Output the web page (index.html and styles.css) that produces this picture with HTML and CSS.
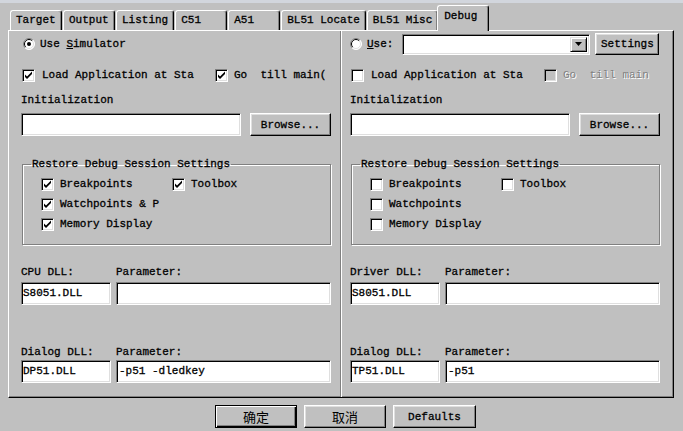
FILE: index.html
```html
<!DOCTYPE html>
<html>
<head>
<meta charset="utf-8">
<link rel="stylesheet" href="styles.css">
</head>
<body>
<div class="topstrip"></div>
<div class="dialog">
  <div class="tabs">
    <div class="tab">Target</div>
    <div class="tab">Output</div>
    <div class="tab">Listing</div>
    <div class="tab">C51</div>
    <div class="tab">A51</div>
    <div class="tab">BL51 Locate</div>
    <div class="tab">BL51 Misc</div>
    <div class="tab active">Debug</div>
  </div>
  <div class="panel">
    <div class="col col-left">
      <div class="row r1">
        <span class="radio"><svg width="12" height="12" viewBox="0 0 12 12"><circle cx="6" cy="6" r="5.5" fill="#fff"/><path d="M2.1 9.9A5.5 5.5 0 0 1 9.9 2.1" stroke="#808080" fill="none"/><path d="M9.9 2.1A5.5 5.5 0 0 1 2.1 9.9" stroke="#fff" fill="none"/><path d="M2.8 9.2A4.5 4.5 0 0 1 9.2 2.8" stroke="#000" fill="none"/><path d="M9.2 2.8A4.5 4.5 0 0 1 2.8 9.2" stroke="#dfdfdf" fill="none"/><circle cx="6" cy="6" r="2" fill="#000"/></svg></span>
        <span class="rlabel">Use <u>S</u>imulator</span>
      </div>
      <div class="row r2">
        <div class="cbi first"><span class="cb"><svg width="11" height="11" viewBox="1 1 11 11"><polygon points="3,5.5 5,7.5 10,2.5 10,5 5,10 3,8" fill="#000"/></svg></span><span>Load Application at Sta</span></div>
        <div class="cbi"><span class="cb"><svg width="11" height="11" viewBox="1 1 11 11"><polygon points="3,5.5 5,7.5 10,2.5 10,5 5,10 3,8" fill="#000"/></svg></span><span>Go&nbsp; till main(</span></div>
      </div>
      <div class="label init">Initialization</div>
      <div class="row r3">
        <div class="field wide"></div>
        <div class="btn browse">Browse...</div>
      </div>
      <fieldset class="group">
        <legend>Restore Debug Session Settings</legend>
        <div class="grid">
          <div class="cbi"><span class="cb"><svg width="11" height="11" viewBox="1 1 11 11"><polygon points="3,5.5 5,7.5 10,2.5 10,5 5,10 3,8" fill="#000"/></svg></span><span>Breakpoints</span></div>
          <div class="cbi"><span class="cb"><svg width="11" height="11" viewBox="1 1 11 11"><polygon points="3,5.5 5,7.5 10,2.5 10,5 5,10 3,8" fill="#000"/></svg></span><span>Toolbox</span></div>
          <div class="cbi span2"><span class="cb"><svg width="11" height="11" viewBox="1 1 11 11"><polygon points="3,5.5 5,7.5 10,2.5 10,5 5,10 3,8" fill="#000"/></svg></span><span>Watchpoints &amp; P</span></div>
          <div class="cbi span2"><span class="cb"><svg width="11" height="11" viewBox="1 1 11 11"><polygon points="3,5.5 5,7.5 10,2.5 10,5 5,10 3,8" fill="#000"/></svg></span><span>Memory Display</span></div>
        </div>
      </fieldset>
      <div class="dll-labels first-dll"><span class="dl">CPU DLL:</span><span>Parameter:</span></div>
      <div class="row dll"><div class="field small">S8051.DLL</div><div class="field param"></div></div>
      <div class="dll-labels second-dll"><span class="dl">Dialog DLL:</span><span>Parameter:</span></div>
      <div class="row dll"><div class="field small">DP51.DLL</div><div class="field param">-p51 -dledkey</div></div>
    </div>
    <div class="sep"></div>
    <div class="col col-right">
      <div class="row r1">
        <span class="radio"><svg width="12" height="12" viewBox="0 0 12 12"><circle cx="6" cy="6" r="5.5" fill="#fff"/><path d="M2.1 9.9A5.5 5.5 0 0 1 9.9 2.1" stroke="#808080" fill="none"/><path d="M9.9 2.1A5.5 5.5 0 0 1 2.1 9.9" stroke="#fff" fill="none"/><path d="M2.8 9.2A4.5 4.5 0 0 1 9.2 2.8" stroke="#000" fill="none"/><path d="M9.2 2.8A4.5 4.5 0 0 1 2.8 9.2" stroke="#dfdfdf" fill="none"/></svg></span>
        <span class="rlabel"><u>U</u>se:</span>
        <div class="field combo"><span class="drop"><svg width="7" height="4" viewBox="0 0 7 4"><polygon points="0,0 7,0 3.5,4" fill="#000"/></svg></span></div>
        <div class="btn settings">Settings</div>
      </div>
      <div class="row r2">
        <div class="cbi first"><span class="cb"></span><span>Load Application at Sta</span></div>
        <div class="cbi disabled"><span class="cb dis"></span><span>Go&nbsp; till main</span></div>
      </div>
      <div class="label init">Initialization</div>
      <div class="row r3">
        <div class="field wide"></div>
        <div class="btn browse">Browse...</div>
      </div>
      <fieldset class="group">
        <legend>Restore Debug Session Settings</legend>
        <div class="grid">
          <div class="cbi"><span class="cb"></span><span>Breakpoints</span></div>
          <div class="cbi"><span class="cb"></span><span>Toolbox</span></div>
          <div class="cbi span2"><span class="cb"></span><span>Watchpoints</span></div>
          <div class="cbi span2"><span class="cb"></span><span>Memory Display</span></div>
        </div>
      </fieldset>
      <div class="dll-labels first-dll"><span class="dl">Driver DLL:</span><span>Parameter:</span></div>
      <div class="row dll"><div class="field small">S8051.DLL</div><div class="field param"></div></div>
      <div class="dll-labels second-dll"><span class="dl">Dialog DLL:</span><span>Parameter:</span></div>
      <div class="row dll"><div class="field small">TP51.DLL</div><div class="field param">-p51</div></div>
    </div>
  </div>
  <div class="buttons">
    <div class="btn bottom default cjk">确定</div>
    <div class="btn bottom cjk">取消</div>
    <div class="btn bottom defaults">Defaults</div>
  </div>
</div>
</body>
</html>
```
FILE: styles.css
```css
* { box-sizing: border-box; }
html, body { margin: 0; padding: 0; }
body {
  background: #c0c0c0;
  font-family: "Liberation Mono", "DejaVu Sans Mono", monospace;
  font-size: 11px;
  color: #000;
  -webkit-text-stroke: 0.3px;
  width: 683px;
  height: 431px;
  overflow: hidden;
}
.topstrip { height: 3px; background: #d2d6dd; }
.dialog { padding-left: 8px; }

/* tabs */
.tabs {
  display: flex;
  align-items: flex-end;
  gap: 1px;
  height: 27px;
  padding-left: 2px;
}
.tab {
  height: 20px;
  min-width: 52px;
  padding: 0 5px;
  line-height: 18px;
  white-space: nowrap;
  background: #c0c0c0;
  border-top: 1px solid #fff;
  border-left: 1px solid #fff;
  border-right: 1px solid #000;
  border-radius: 3px 3px 0 0;
  box-shadow: inset -1px 0 #808080;
}
.tab.active {
  height: 26px;
  margin: 0 -2px -1px -2px;
  padding: 2px 5px 0 6px;
  position: relative;
  z-index: 2;
  line-height: 16px;
}

/* panel */
.panel {
  display: flex;
  width: 666px;
  height: 368px;
  border-top: 1px solid #fff;
  border-left: 1px solid #fff;
  border-right: 1px solid #000;
  border-bottom: 1px solid #000;
  box-shadow: inset -1px -1px #808080;
}
.col { display: flex; flex-direction: column; padding-top: 2px; }
.col-left { width: 331px; padding-left: 12px; }
.col-right { width: 331px; padding-left: 8px; }
.sep { width: 2px; border-left: 1px solid #808080; border-right: 1px solid #fff; }

.row { display: flex; align-items: center; }
.r1 { height: 22px; }
.r2 { height: 16px; margin-top: 12px; }
.label { height: 14px; line-height: 14px; }
.init { margin-top: 10px; }
.r3 { height: 23px; margin-top: 6px; gap: 9px; }

.radio { width: 12px; height: 12px; margin-left: 2px; margin-right: 5px; display: block; }
.radio svg { display: block; }
.col-right .radio { margin-left: 0; }
.rlabel { white-space: nowrap; }

/* checkboxes */
.cbi { display: flex; align-items: center; gap: 6px; white-space: nowrap; height: 20px; }
.r2 .cbi { height: 16px; }
.r2 .cbi.first { width: 194px; gap: 7px; padding-left: 1px; }
.cb {
  width: 13px;
  height: 13px;
  flex: none;
  background: #fff;
  border: 1px solid;
  border-color: #808080 #fff #fff #808080;
  box-shadow: inset 1px 1px #000, inset -1px -1px #dfdfdf;
}
.cb svg { display: block; }
.cb.dis { background: #c0c0c0; }
.disabled span:last-child { color: #808080; text-shadow: 1px 1px #fff; -webkit-text-stroke: 0; }

/* fields */
.field {
  background: #fff;
  height: 23px;
  line-height: 21px;
  padding-left: 1px;
  border: 1px solid;
  border-color: #808080 #fff #fff #808080;
  box-shadow: inset 1px 1px #000, inset -1px -1px #dfdfdf;
  white-space: nowrap;
  overflow: hidden;
}
.wide { width: 220px; }
.small { width: 90px; }
.param { width: 215px; padding-left: 2px; }
.combo {
  width: 188px;
  height: 21px;
  margin-left: 9px;
  display: flex;
  justify-content: flex-end;
  padding: 2px;
}
.drop {
  width: 17px;
  height: 15px;
  background: #c0c0c0;
  border: 1px solid;
  border-color: #dfdfdf #000 #000 #dfdfdf;
  box-shadow: inset 1px 1px #fff, inset -1px -1px #808080;
  display: flex;
  align-items: center;
  justify-content: center;
}
.drop svg { display: block; }

/* buttons */
.btn {
  display: flex;
  align-items: center;
  justify-content: center;
  background: #c0c0c0;
  border: 1px solid;
  border-color: #fff #000 #000 #fff;
  box-shadow: inset -1px -1px #808080, inset 1px 1px #dfdfdf;
  white-space: nowrap;
}
.browse { width: 81px; height: 23px; }
.settings { width: 64px; height: 22px; margin-left: 5px; }

/* group box */
.group {
  width: 309px;
  margin: 21px 0 0 1px;
  padding: 3px 0 10px 18px;
  border: 1px solid #808080;
  box-shadow: 1px 1px #fff, inset 1px 1px #fff;
  min-width: 0;
}
.group legend {
  padding: 0 1px;
  margin-left: -10px;
  line-height: 14px;
  height: 14px;
}
.grid { display: grid; grid-template-columns: 131px auto; grid-auto-rows: 20px; }
.span2 { grid-column: 1 / span 2; }

/* dll */
.dll-labels { display: flex; height: 14px; line-height: 14px; white-space: nowrap; }
.dl { width: 95px; }
.first-dll { margin-top: 20px; }
.second-dll { margin-top: 40px; }
.dll { height: 23px; margin-top: 3px; gap: 5px; }
.second-dll + .dll { margin-top: 1px; }

/* bottom buttons */
.buttons { display: flex; gap: 7px; padding-left: 207px; margin-top: 7px; }
.bottom { width: 82px; height: 23px; }
.defaults { width: 83px; }
.cjk { font-family: "Noto Sans CJK SC", sans-serif; font-size: 13px; -webkit-text-stroke: 0; }
.default {
  border: 1px solid #000;
  box-shadow: inset 1px 1px #fff, inset -1px -1px #000, inset -2px -2px #808080;
}
```
